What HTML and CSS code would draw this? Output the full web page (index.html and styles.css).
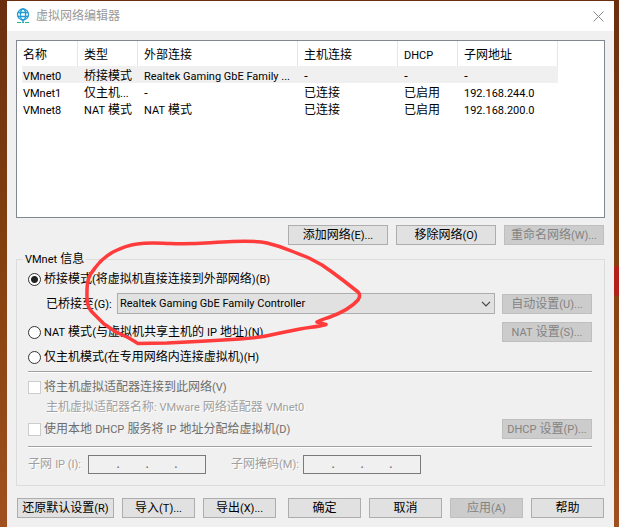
FILE: index.html
```html
<!DOCTYPE html>
<html lang="zh-CN">
<head>
<meta charset="utf-8">
<title>虚拟网络编辑器</title>
<link rel="stylesheet" href="styles.css">
</head>
<body>
<main class="window">
  <header class="titlebar">
    <svg class="logo" viewBox="0 0 14 16" aria-hidden="true">
      <g fill="none" stroke="#1f9bd4" stroke-width="1.3">
        <circle cx="7" cy="6.5" r="5.5"/>
        <ellipse cx="7" cy="6.5" rx="2.6" ry="5.5"/>
        <path d="M2 4.5H12M2 8.5H12M7 12V14"/>
      </g>
      <path d="M1 14.5H5M6 14.5H8M9 14.5H13" stroke="#1fb58f" stroke-width="1.2"/>
    </svg>
    <h1 class="title">虚拟网络编辑器</h1>
    <button class="close" type="button" aria-label="关闭">
      <svg viewBox="0 0 11 11" aria-hidden="true"><path d="M.5 .5L10.5 10.5M10.5 .5L.5 10.5" stroke="#8a8a8a" fill="none"/></svg>
    </button>
  </header>

  <div class="content">
    <div class="list">
      <table class="networks">
        <colgroup><col class="c-name"><col class="c-small"><col class="c-wide"><col class="c-mid"><col class="c-small"><col class="c-mid"></colgroup>
        <thead>
          <tr><th>名称</th><th>类型</th><th>外部连接</th><th>主机连接</th><th><span class="en">DHCP</span></th><th>子网地址</th></tr>
        </thead>
        <tbody>
          <tr class="selected"><td><span class="en">VMnet0</span></td><td>桥接模式</td><td><span class="en">Realtek Gaming GbE Family ...</span></td><td>-</td><td>-</td><td>-</td></tr>
          <tr><td><span class="en">VMnet1</span></td><td>仅主机<span class="en">...</span></td><td>-</td><td>已连接</td><td>已启用</td><td><span class="en">192.168.244.0</span></td></tr>
          <tr><td><span class="en">VMnet8</span></td><td><span class="en">NAT</span> 模式</td><td><span class="en">NAT</span> 模式</td><td>已连接</td><td>已启用</td><td><span class="en">192.168.200.0</span></td></tr>
        </tbody>
      </table>
    </div>

    <div class="list-actions">
      <button class="btn" type="button">添加网络<span class="en">(E)...</span></button>
      <button class="btn" type="button">移除网络<span class="en">(O)</span></button>
      <button class="btn" type="button" disabled>重命名网络<span class="en">(W)...</span></button>
    </div>

    <fieldset class="info">
      <legend><span class="en">VMnet</span> 信息</legend>

      <div class="row row-first">
        <input type="radio" name="mode" id="bridged" checked>
        <label for="bridged">桥接模式<span class="en">(</span>将虚拟机直接连接到外部网络<span class="en">)(B)</span></label>
      </div>
      <div class="row row-bridge">
        <label class="bridge-label" for="adapter">已桥接至<span class="en">(G):</span></label>
        <div class="combo">
          <select id="adapter"><option>Realtek Gaming GbE Family Controller</option></select>
          <svg class="chevron" viewBox="0 0 10 6" aria-hidden="true"><path d="M1 .8L5 4.8L9 .8" fill="none" stroke="#444" stroke-width="1.2"/></svg>
        </div>
        <button class="btn side" type="button" disabled>自动设置<span class="en">(U)...</span></button>
      </div>
      <div class="row row-nat">
        <input type="radio" name="mode" id="nat">
        <label for="nat"><span class="en">NAT</span> 模式<span class="en">(</span>与虚拟机共享主机的 <span class="en">IP</span> 地址<span class="en">)(N)</span></label>
        <button class="btn side" type="button" disabled><span class="en">NAT</span> 设置<span class="en">(S)...</span></button>
      </div>
      <div class="row">
        <input type="radio" name="mode" id="hostonly">
        <label for="hostonly">仅主机模式<span class="en">(</span>在专用网络内连接虚拟机<span class="en">)(H)</span></label>
      </div>

      <hr>

      <div class="row off">
        <input type="checkbox" id="host-adapter" disabled>
        <label for="host-adapter">将主机虚拟适配器连接到此网络<span class="en">(V)</span></label>
      </div>
      <p class="note">主机虚拟适配器名称<span class="en">: VMware</span> 网络适配器 <span class="en">VMnet0</span></p>
      <div class="row off row-dhcp">
        <input type="checkbox" id="dhcp" disabled>
        <label for="dhcp">使用本地 <span class="en">DHCP</span> 服务将 <span class="en">IP</span> 地址分配给虚拟机<span class="en">(D)</span></label>
        <button class="btn side" type="button" disabled><span class="en">DHCP</span> 设置<span class="en">(P)...</span></button>
      </div>

      <hr>

      <div class="row subnet">
        <label class="ip-label" for="ip1">子网 <span class="en">IP (I):</span></label>
        <div class="ip"><input id="ip1" disabled>.<input aria-label="子网 IP 2" disabled>.<input aria-label="子网 IP 3" disabled>.<input aria-label="子网 IP 4" disabled></div>
        <label class="mask-label" for="mask1">子网掩码<span class="en">(M):</span></label>
        <div class="ip"><input id="mask1" disabled>.<input aria-label="子网掩码 2" disabled>.<input aria-label="子网掩码 3" disabled>.<input aria-label="子网掩码 4" disabled></div>
      </div>
    </fieldset>

    <footer class="footer">
      <button class="btn" type="button">还原默认设置<span class="en">(R)</span></button>
      <button class="btn" type="button">导入<span class="en">(T)...</span></button>
      <button class="btn" type="button">导出<span class="en">(X)...</span></button>
      <button class="btn ok" type="button">确定</button>
      <button class="btn" type="button">取消</button>
      <button class="btn" type="button" disabled>应用<span class="en">(A)</span></button>
      <button class="btn" type="button">帮助</button>
    </footer>
  </div>
</main>

<svg class="scribble" viewBox="0 0 280 110" aria-hidden="true">
  <path d="M7 52C7 42 8 36 15 28C20 21 26 16 33 12C41 8 49 5 57 4C69 2 77 3 90 3.500C117 5 130 2 153 1.500C166 1 178 1 187 3C200 6 207 9 214 12L229 18L242 25L252 32L264 41L278 52C280 54 280 57 278 60C271 68 258 74 250 77C245 79 242 79 237 82L246 84.500C238 87 231 87 220 89L200 93C184 97 177 98 160 99L117 101.500L87 103L58 103.500L49 98L36 92L24 84L12 72C6 66 7 57 7 49"/>
</svg>
</body>
</html>
```

FILE: styles.css
```css
* { box-sizing: border-box; }

body {
  margin: 0;
  min-height: 100vh;
  padding: 1px 5px 0 7px;
  display: flex;
  background:
    radial-gradient(circle at 100% 281px, #b3201c 14px, transparent 16px),
    linear-gradient(#6b2f10, #84410f 50%, #a0501f);
  color: #000;
  font: 12px/16px "Noto Sans", "Noto Sans CJK SC", sans-serif;
}

.en { font-family: Roboto, sans-serif; font-size: 11px; line-height: 12px; }

.window { flex: 1; min-width: 0; background: #f0f0f0; }

.titlebar {
  display: flex;
  align-items: center;
  height: 30px;
  padding: 0 10px 0 9px;
  background: #fff;
}
.logo { width: 14px; height: 16px; }
.title { flex: 1; margin: 0 0 0 6px; font-size: 12px; font-weight: 400; color: #999; }
.close { display: flex; padding: 0; border: 0; background: none; }
.close svg { width: 11px; height: 11px; }

.content { padding: 9px; }

.list { height: 178px; border: 1px solid #828790; background: #fff; overflow: hidden; }
.networks { width: 541px; table-layout: fixed; border-collapse: separate; border-spacing: 0; }
.c-name { width: 61px; }
.c-small { width: 60px; }
.c-wide { width: 160px; }
.c-mid { width: 100px; }
.networks th, .networks td {
  height: 17px;
  padding: 1px 0 0 6px;
  text-align: left;
  font-weight: 400;
  line-height: 15px;
  white-space: nowrap;
  overflow: hidden;
}
.networks th { height: 25px; border-right: 1px solid #e5e5e5; }
.selected td { background: #f0f0f0; }
.selected td:first-child { background: linear-gradient(90deg, #fff 5px, #f0f0f0 5px); }

.btn {
  height: 20px;
  padding: 0;
  border: 1px solid #adadad;
  background: #e1e1e1;
  color: #000;
  font: inherit;
  line-height: 16px;
  white-space: nowrap;
}
.btn:disabled { border-color: #bfbfbf; background: #ccc; color: #838383; }

.list-actions { display: flex; justify-content: flex-end; gap: 8px; padding: 7px 1px 6px 0; }
.list-actions .btn { width: 100px; }

.info {
  min-width: 0;
  height: 235px;
  margin: 0;
  padding: 0 12px 0 11px;
  border: 1px solid #dcdcdc;
}
.info legend { margin-left: -5px; padding: 0 2px; line-height: 16px; }

.row { display: flex; align-items: center; height: 20px; }
.row-first { margin-top: 2px; }
.row-bridge { height: 25px; margin: 2px 0 6px; }
.row-nat { margin-bottom: 5px; }
.row input[type="radio"], .row input[type="checkbox"] {
  appearance: none;
  width: 13px;
  height: 13px;
  margin: 0 3px 0 0;
  border: 1px solid #333;
  background: #fff;
}
.row input[type="radio"] { border-radius: 50%; }
.row input[type="radio"]:checked { background: radial-gradient(circle, #222 3px, #fff 4px); }
.row input[type="checkbox"] { border-color: #ccc; }
.off { color: #6d6d6d; }
.side { width: 90px; margin-left: auto; }

.bridge-label { width: 71px; margin-left: 18px; }
.combo { position: relative; flex: 1; margin-right: 7px; }
.combo select {
  display: block;
  appearance: none;
  width: 100%;
  height: 21px;
  padding: 0 20px 0 2px;
  border: 1px solid #adadad;
  border-radius: 0;
  background: #e1e1e1;
  color: #000;
  font: 11px/16px Roboto, sans-serif;
}
.chevron { position: absolute; right: 4px; top: 8px; width: 10px; height: 6px; pointer-events: none; }

hr { height: 2px; margin: 4px 0; border: 0; border-top: 1px solid #a0a0a0; background: #fff; }
.note { margin: 2px 0 4px 18px; color: #a0a0a0; text-shadow: 1px 1px #fff; }
.row-dhcp { margin-bottom: 7px; }

.subnet { margin-top: 6px; color: #a0a0a0; text-shadow: 1px 1px #fff; }
.ip-label { width: 60px; }
.mask-label { width: 72px; margin-left: 25px; }
.ip {
  display: flex;
  width: 118px;
  height: 19px;
  padding: 0 2px;
  border: 1px solid #7a7a7a;
  color: #6d6d6d;
  text-shadow: none;
}
.ip input { flex: 1; min-width: 0; padding: 0; border: 0; background: none; font: inherit; text-align: center; }

.footer { display: grid; grid-template-columns: 97fr repeat(2, 73fr) 77fr repeat(3, 73fr); gap: 8px; padding: 12px 1px 0; }
.ok { margin-left: 4px; }

.scribble {
  position: absolute;
  left: 80px;
  top: 240px;
  width: 280px;
  height: 110px;
  overflow: visible;
  pointer-events: none;
}
.scribble path { fill: none; stroke: #ff3b3b; stroke-width: 3.500; stroke-linecap: round; stroke-linejoin: round; }
```
